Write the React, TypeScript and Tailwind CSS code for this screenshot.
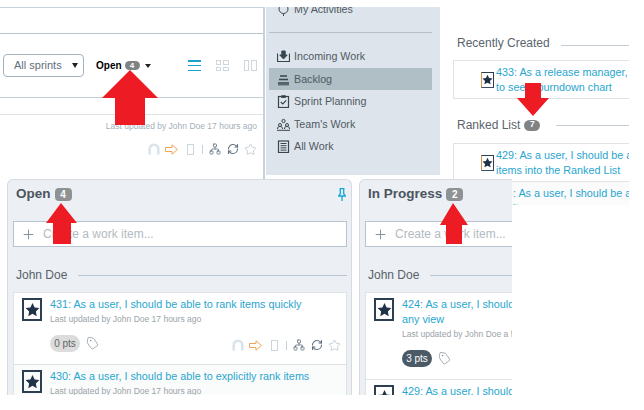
import React from "react";
import { Tag, Plus, Network, RefreshCw, Star } from "lucide-react";

function Arrow({ className, points, w, h }: { className: string; points: string; w: number; h: number }) {
  return (
    <svg className={className} width={w} height={h} viewBox={`0 0 ${w} ${h}`}>
      <polygon points={points} fill="#ed1c24" />
    </svg>
  );
}

function StarBox({ small }: { small?: boolean }) {
  return small ? (
    <div className="w-[13px] h-[16px] border border-[#2c3e50] border-l-[#d9924a] border-b-[#3a5068] flex items-center justify-center shrink-0">
      <svg width="11" height="11" viewBox="0 0 24 24"><polygon fill="#1f3247" points="12,1.5 15.4,8.6 23,9.6 17.4,15 18.8,22.6 12,18.9 5.2,22.6 6.6,15 1,9.6 8.6,8.6" /></svg>
    </div>
  ) : (
    <div className="w-[20px] h-[23px] border-2 border-[#2c3e50] flex items-center justify-center shrink-0">
      <svg width="15" height="15" viewBox="0 0 24 24"><polygon fill="#1f3247" points="12,1.5 15.4,8.6 23,9.6 17.4,15 18.8,22.6 12,18.9 5.2,22.6 6.6,15 1,9.6 8.6,8.6" /></svg>
    </div>
  );
}

function ActionIcons() {
  return (
    <div className="flex items-center">
      <svg width="12" height="12" viewBox="0 0 12 12" fill="none" stroke="#dbe4ea" strokeWidth="2.6"><path d="M1.7 11.5V6a4.3 4.3 0 0 1 8.6 0v5.5" /></svg>
      <svg className="ml-[5px]" width="13" height="11" viewBox="0 0 13 11" fill="none" stroke="#f0a556" strokeWidth="1"><path d="M0.5 3.5h6.5V0.8l5.4 4.7-5.4 4.7V7.5H0.5z" /></svg>
      <div className="ml-[9px] w-[7px] h-[11px] border border-[#cbd6dd]" />
      <div className="ml-[8px] w-px h-[9px] bg-[#c5d0d8]" />
      <Network className="ml-[6px]" size={12} strokeWidth={1.6} color="#5f7180" />
      <RefreshCw className="ml-[6px]" size={12} strokeWidth={2.2} color="#5f7180" />
      <Star className="ml-[5px]" size={13} strokeWidth={1.1} color="#a9b4bc" />
    </div>
  );
}

function SideIcon({ kind }: { kind: string }) {
  const c = "#37454f";
  return (
    <svg width="13" height="13" viewBox="0 0 13 13" fill="none" stroke={c} strokeWidth="1">
      {kind === "in" && <><path d="M0.5 3.5v8h12v-8" strokeWidth="1.2" /><path d="M4.8 1v4H2.8l3.7 4 3.7-4H8.2V1z" fill={c} /></>}
      {kind === "back" && <><path d="M3 3h7M2 6.5h9M1 10h11" strokeWidth="1.3" /><path d="M1 11.8h11" /></>}
      {kind === "sprint" && <><rect x="1.5" y="1.5" width="10" height="11" strokeWidth="1.2" /><path d="M4.5 0.8h4v1.6h-4z" fill={c} /><path d="M3.8 7l2 2 3.4-3.6" strokeWidth="1.2" /></>}
      {kind === "team" && <><circle cx="6.5" cy="3" r="1.6" /><circle cx="3" cy="7" r="1.5" /><circle cx="10" cy="7" r="1.5" /><path d="M0.5 11c0-2 1-2.5 2.5-2.5S5.5 9 5.5 11M7.5 11c0-2 1-2.5 2.5-2.5s2.5.5 2.5 2.5M0 12.3h13" /></>}
      {kind === "all" && <><rect x="1.5" y="1" width="10" height="11.5" strokeWidth="1.2" /><path d="M3.5 3.5h6M3.5 5.7h6M3.5 7.9h6M3.5 10.1h6" /></>}
      {kind === "act" && <><circle cx="6.5" cy="6" r="4.5" /><path d="M6.5 11v2" /></>}
    </svg>
  );
}

function SideItem({ kind, label, active }: { kind: string; label: string; active?: boolean }) {
  return (
    <div className={`h-[22px] flex items-center gap-[4px] pl-[8px] text-[10.7px] text-[#4e5a63] ${active ? "bg-[#b0bec5]" : ""}`}>
      <SideIcon kind={kind} />
      <span>{label}</span>
    </div>
  );
}

function Card({ title, title2, updated, pts, dark, actions, alt }: { title: string; title2?: string; updated: string; pts?: string; dark?: boolean; actions?: boolean; alt?: boolean }) {
  return (
    <div className={`border border-[#dfe3e6] -mt-px flex gap-[8px] pl-[8px] pt-[5px] pb-[12px] w-[334px] ${alt ? "bg-[#fafbfb]" : "bg-white"}`}>
      <StarBox />
      <div className="flex-1 min-w-0 pr-[5px]">
        <div className="-mt-px text-[10.8px] leading-[15px] text-[#28a6cf] whitespace-nowrap">{title}</div>
        {title2 && <div className="text-[10.8px] leading-[15px] text-[#28a6cf]">{title2}</div>}
        <div className="text-[8.5px] leading-[12px] mt-px text-[#9aa3a9] whitespace-nowrap">{updated}</div>
        {pts && (
          <div className="mt-[10px] flex items-center justify-between">
            <div className="flex items-center gap-[6px]">
              <span className={`w-[30px] h-[17px] rounded-full flex items-center justify-center text-[10px] ${dark ? "bg-[#4a5a66] text-white" : "bg-[#dcdcdc] text-[#666]"}`}>{pts}</span>
              <Tag size={13} strokeWidth={1.1} color="#75828c" className="rotate-[10deg]" />
            </div>
            {actions && <div className="mt-[3px]"><ActionIcons /></div>}
          </div>
        )}
      </div>
    </div>
  );
}

function Column({ title, count, width, pin, children }: { title: string; count: string; width: string; pin?: boolean; children: React.ReactNode }) {
  return (
    <div className={`${width} h-full overflow-hidden shrink-0 rounded-t-[6px] border border-b-0 border-[#d5dbe0] bg-[#eceff3]`}>
      <div className="w-[345px] pl-[5px] pr-[4px]">
        <div className="h-[29px] pl-[3px] flex items-center relative">
          <span className="text-[13.5px] font-bold text-[#4a5560]">{title}</span>
          <span className="ml-[4px] w-[17px] h-[13px] rounded-[4px] bg-[#8f9294] text-white text-[10px] font-bold flex items-center justify-center">{count}</span>
          {pin && (
            <svg className="absolute right-[3px] top-[8px]" width="8" height="13" viewBox="0 0 8 13" fill="none" stroke="#14a7d6" strokeWidth="1.3">
              <path d="M1.5 0.7h5M2.3 0.7v5L0.7 8h6.6L5.7 5.7v-5M4 8v5" />
            </svg>
          )}
        </div>
        <div className="mt-[12px] h-[26px] w-[334px] bg-white border border-[#b8c4cf] flex items-center pl-[7px] gap-[7px]">
          <Plus size={15} strokeWidth={1.5} color="#7f8a92" />
          <span className="text-[12px] text-[#b3babf]">Create a work item...</span>
        </div>
        <div className="mt-[18px] h-[20px] w-[334px] flex items-center pl-[3px] gap-[11px]">
          <span className="text-[12px] text-[#58626a] whitespace-nowrap">John Doe</span>
          <div className="flex-1 h-px bg-[#b8c4cf]" />
        </div>
        <div className="mt-[8px]">{children}</div>
      </div>
    </div>
  );
}

export default function App() {
  return (
    <div className="relative w-[644px] h-[410px] bg-white overflow-hidden font-['Liberation_Sans',Arial,sans-serif]">
      <div className="flex h-[179px] pt-[7px]">
        {/* Left crop */}
        <div className="w-[265px] h-[172px] border-r-2 border-t border-[#c8d2d9] shrink-0 flex flex-col">
          <div className="h-[26px] border-b border-[#b7c3cc]" />
          <div className="h-[64px] border-b border-[#c5ced5] flex items-center pl-[3px]">
            <div className="w-[81px] h-[23px] border border-[#a3b4c0] rounded-[4px] flex items-center justify-between pl-[10px] pr-[5px] text-[11px] text-[#5f6f7c]">
              <span>All sprints</span>
              <svg width="6" height="5" viewBox="0 0 6 5"><polygon points="0,0 6,0 3,5" fill="#222" /></svg>
            </div>
            <span className="ml-[12px] text-[10px] font-bold text-black">Open</span>
            <span className="ml-[3px] w-[15px] h-[9px] rounded-full bg-[#808385] text-white text-[8px] font-bold flex items-center justify-center">4</span>
            <svg className="ml-[5px]" width="6" height="4" viewBox="0 0 6 4"><polygon points="0,0 6,0 3,4" fill="#222" /></svg>
            <div className="ml-[37px] w-[13px] h-[11px] flex flex-col justify-between">
              <div className="h-[1.5px] bg-[#1ba0c8]" /><div className="h-[1.5px] bg-[#1ba0c8]" /><div className="h-[1.5px] bg-[#1ba0c8]" />
            </div>
            <div className="ml-[15px] w-[13px] h-[11px] grid grid-cols-2 grid-rows-2 gap-[2px]">
              <div className="border border-[#d0d8de]" /><div className="border border-[#d0d8de]" /><div className="border border-[#d0d8de]" /><div className="border border-[#d0d8de]" />
            </div>
            <div className="ml-[15px] w-[13px] h-[11px] grid grid-cols-2 gap-[2px]">
              <div className="border border-[#d0d8de]" /><div className="border border-[#d0d8de]" />
            </div>
          </div>
          <div className="h-[16px]" />
          <div className="flex-1 border-t border-[#dfe3e6] flex flex-col items-end pr-[6px] pt-[5px]">
            <span className="text-[8.5px] text-[#a4b0ba]">Last updated by John Doe 17 hours ago</span>
            <div className="mt-[10px]"><ActionIcons /></div>
          </div>
        </div>
        {/* Navigation crop */}
        <div className="w-[174px] h-[168px] bg-[#dee4eb] shrink-0 ml-px pl-[3px] pr-[8px] overflow-hidden">
          <div className="h-[25px] -mt-[10px] flex items-center gap-[4px] pl-[8px] text-[10.7px] text-[#4e5a63]"><SideIcon kind="act" /><span>My Activities</span></div>
          <div className="mt-[10px] h-px bg-[#b4bfc7]" />
          <div className="mt-[12px]">
            <SideItem kind="in" label="Incoming Work" />
            <div className="mt-px"><SideItem kind="back" label="Backlog" active /></div>
            <SideItem kind="sprint" label="Sprint Planning" />
            <div className="mt-px"><SideItem kind="team" label="Team's Work" /></div>
            <SideItem kind="all" label="All Work" />
          </div>
        </div>
        {/* Right crop */}
        <div className="w-[189px] h-[198px] overflow-hidden shrink-0 pl-[13px] relative">
          <div className="h-[53px] flex items-end pl-[4px] pb-[8px] gap-[11px]">
            <span className="text-[12px] text-[#5a646c] whitespace-nowrap">Recently Created</span>
            <div className="flex-1 h-px bg-[#c5ced5] mb-[6px]" />
          </div>
          <div className="h-[39px] border border-r-0 border-[#dfe3e6] flex items-center gap-[2px] pl-[27px] text-[10.8px] leading-[15px] text-[#28a6cf]">
            <StarBox small />
            <div className="whitespace-nowrap">433: As a release manager,<br />to see a burndown chart</div>
          </div>
          <div className="h-[44px] flex items-center pl-[4px] pt-[8px] gap-[1px]">
            <span className="text-[12px] text-[#5a646c] whitespace-nowrap">Ranked List</span>
            <span className="ml-[3px] w-[16px] h-[11px] rounded-full bg-[#808385] text-white text-[9px] font-bold flex items-center justify-center">7</span>
            <div className="ml-[15px] flex-1 h-px bg-[#c5ced5]" />
          </div>
          <div className="h-[38px] border-t border-l border-[#dfe3e6] flex items-center gap-[2px] pl-[27px] text-[10.8px] leading-[15px] text-[#28a6cf] overflow-hidden">
            <StarBox small />
            <div className="whitespace-nowrap">429: As a user, I should be a<br />items into the Ranked List</div>
          </div>
          <div className="h-[24px] border-t border-[#dfe3e6] bg-[#fbfbfb] pl-[60px] pt-[4px] text-[10.8px] leading-[15px] text-[#28a6cf] whitespace-nowrap">: As a user, I should be a<br />items</div>
        </div>
      </div>
      {/* Board crop */}
      <div className="relative z-10 pl-[7px] w-[512px] h-[216px] bg-white flex gap-[7px] overflow-hidden">
        <Column title="Open" count="4" width="w-[345px]" pin>
          <Card title="431: As a user, I should be able to rank items quickly" updated="Last updated by John Doe 17 hours ago" pts="0 pts" actions />
          <Card title="430: As a user, I should be able to explicitly rank items" updated="Last updated by John Doe 17 hours ago" alt />
        </Column>
        <Column title="In Progress" count="2" width="w-[160px]">
          <Card title="424: As a user, I should be able to" title2="any view" updated="Last updated by John Doe a few seconds ago" pts="3 pts" dark />
          <Card title="429: As a user, I should be able to" updated="Last updated by John Doe" />
        </Column>
      </div>
      {/* Annotation arrows */}
      <Arrow className="absolute z-20 left-[102px] top-[70px]" w={56} h={55} points="28,0 56,28 43,28 43,55 13,55 13,28 0,28" />
      <Arrow className="absolute z-20 left-[517px] top-[83px]" w={32} h={33} points="8,0 24,0 24,15 32,15 16,33 0,15 8,15" />
      <Arrow className="absolute z-20 left-[46px] top-[203px]" w={32} h={41} points="15,0 31,20 25,20 25,41 7,41 7,20 0,20" />
      <Arrow className="absolute z-20 left-[440px] top-[203px]" w={28} h={41} points="13,0 28,22 22,22 22,41 6,41 6,22 0,22" />
    </div>
  );
}
